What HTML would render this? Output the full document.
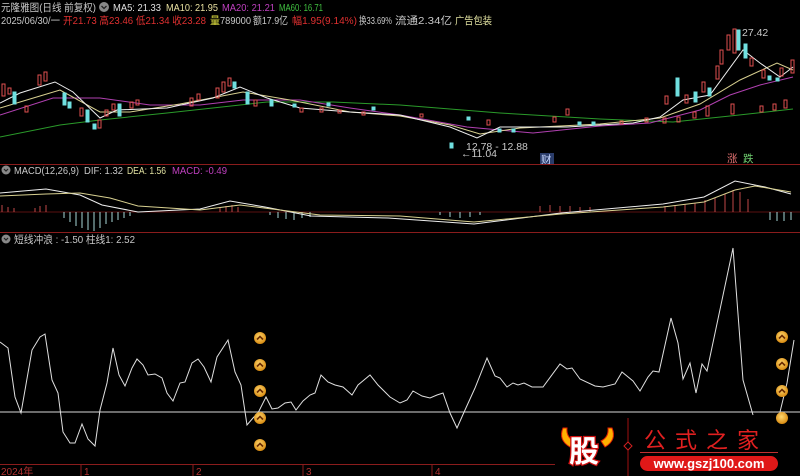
<!DOCTYPE html>
<html><head><meta charset="utf-8"><style>
html,body{margin:0;padding:0;background:#000;width:800px;height:476px;overflow:hidden}
svg{display:block}
text{font-family:"Liberation Sans","Noto Sans CJK SC",sans-serif;font-size:10.5px}
</style></head><body>
<svg width="800" height="476" viewBox="0 0 800 476" xmlns="http://www.w3.org/2000/svg">
<rect width="800" height="476" fill="#000"/>
<!-- header -->
<text x="1" y="11" fill="#c8c8c8" textLength="95" lengthAdjust="spacingAndGlyphs">元隆雅图(日线 前复权)</text>
<circle cx="104" cy="7" r="5" fill="#888"/><path d="M101.5 6 L104 8.5 L106.5 6" stroke="#222" stroke-width="1.3" fill="none"/>
<text x="113" y="11" fill="#e0e0e0" textLength="48" lengthAdjust="spacingAndGlyphs">MA5: 21.33</text>
<text x="166" y="11" fill="#e8e0a0" textLength="52" lengthAdjust="spacingAndGlyphs">MA10: 21.95</text>
<text x="222" y="11" fill="#c040c0" textLength="53" lengthAdjust="spacingAndGlyphs">MA20: 21.21</text>
<text x="279" y="11" fill="#40c040" textLength="44" lengthAdjust="spacingAndGlyphs">MA60: 16.71</text>
<text x="1" y="24" fill="#c8c8c8" textLength="59" lengthAdjust="spacingAndGlyphs">2025/06/30/一</text>
<text x="63" y="24" fill="#e03030" textLength="143" lengthAdjust="spacingAndGlyphs">开21.73 高23.46 低21.34 收23.28</text>
<text x="210" y="24" fill="#e0e040" textLength="10" lengthAdjust="spacingAndGlyphs">量</text>
<text x="220" y="24" fill="#c8c8c8" textLength="31" lengthAdjust="spacingAndGlyphs">789000</text>
<text x="253" y="24" fill="#c8c8c8" textLength="35" lengthAdjust="spacingAndGlyphs">额17.9亿</text>
<text x="292" y="24" fill="#e03030" textLength="65" lengthAdjust="spacingAndGlyphs">幅1.95(9.14%)</text>
<text x="359" y="24" fill="#c8c8c8" textLength="33" lengthAdjust="spacingAndGlyphs">换33.69%</text>
<text x="395" y="24" fill="#c8c8c8" textLength="57" lengthAdjust="spacingAndGlyphs">流通2.34亿</text>
<text x="455" y="24" fill="#e0e0a0" textLength="37" lengthAdjust="spacingAndGlyphs">广告包装</text>
<!-- price panel MA lines -->
<polyline fill="none" stroke="#2a9a2a" stroke-width="1" points="0,137 60,125 100,120 167,113 267,102 333,102 400,105 500,113 600,119 673,122 730,116 793,109"/>
<polyline fill="none" stroke="#b040b0" stroke-width="1" points="0,115 53,98 100,98 150,105 200,105 243,100 300,100 350,108 400,115 467,127 533,133 600,126 650,123 700,110 730,95 760,85 793,77"/>
<polyline fill="none" stroke="#d8d090" stroke-width="1" points="0,108 40,96 60,90 100,112 130,112 180,104 243,92 290,100 350,112 400,116 450,125 480,134 520,128 600,124 660,118 700,104 740,80 777,63 793,70"/>
<polyline fill="none" stroke="#eeeeee" stroke-width="1" points="0,103 20,93 55,82 73,92 100,118 117,110 167,108 213,98 240,87 267,98 300,108 350,112 400,115 450,127 477,138 500,127 567,127 633,123 660,117 683,100 710,95 743,50 760,63 780,77 793,67"/>
<!-- candles -->
<g stroke-width="1">
<g fill="none" stroke="#e05050">
<rect x="2" y="84" width="3" height="12"/><rect x="8" y="88" width="3" height="6"/><rect x="25" y="106" width="3" height="6"/><rect x="38" y="75" width="3" height="10"/><rect x="44" y="72" width="3" height="9"/><rect x="80" y="108" width="3" height="8"/><rect x="98" y="120" width="3" height="8"/><rect x="105" y="110" width="3" height="6"/><rect x="112" y="104" width="3" height="6"/><rect x="130" y="102" width="3" height="6"/><rect x="136" y="100" width="3" height="5"/><rect x="190" y="98" width="3" height="8"/><rect x="197" y="94" width="3" height="6"/><rect x="216" y="88" width="3" height="10"/><rect x="222" y="82" width="3" height="10"/><rect x="228" y="78" width="3" height="8"/><rect x="254" y="100" width="3" height="6"/><rect x="300" y="108" width="3" height="4"/><rect x="320" y="108" width="3" height="4"/><rect x="338" y="110" width="3" height="3"/><rect x="362" y="112" width="3" height="3"/><rect x="420" y="114" width="3" height="3"/><rect x="487" y="120" width="3" height="5"/><rect x="553" y="117" width="3" height="5"/><rect x="566" y="109" width="3" height="6"/><rect x="620" y="121" width="3" height="3"/><rect x="645" y="118" width="3" height="4"/><rect x="663" y="118" width="3" height="5"/><rect x="677" y="117" width="3" height="5"/><rect x="693" y="112" width="3" height="6"/><rect x="706" y="106" width="3" height="10"/><rect x="731" y="104" width="3" height="10"/><rect x="760" y="106" width="3" height="6"/><rect x="773" y="104" width="3" height="6"/><rect x="784" y="100" width="3" height="8"/>
<rect x="665" y="96" width="3" height="8"/><rect x="685" y="95" width="3" height="8"/><rect x="702" y="82" width="3" height="10"/><rect x="716" y="66" width="3" height="13"/><rect x="720" y="50" width="3" height="14"/><rect x="727" y="35" width="3" height="15"/><rect x="733" y="29" width="3" height="24"/><rect x="750" y="58" width="3" height="8"/><rect x="762" y="70" width="3" height="8"/><rect x="780" y="68" width="3" height="8"/><rect x="791" y="60" width="3" height="13"/>
</g>
<g fill="#70e0e0" stroke="#70e0e0">
<rect x="13" y="92" width="3" height="12"/><rect x="63" y="93" width="3" height="12"/><rect x="68" y="102" width="3" height="6"/><rect x="86" y="110" width="3" height="12"/><rect x="93" y="124" width="3" height="5"/><rect x="118" y="104" width="3" height="12"/><rect x="233" y="82" width="3" height="6"/><rect x="246" y="92" width="3" height="12"/><rect x="270" y="100" width="3" height="6"/><rect x="293" y="104" width="3" height="3"/><rect x="327" y="103" width="3" height="3"/><rect x="372" y="107" width="3" height="3"/><rect x="450" y="143" width="3" height="5"/><rect x="467" y="117" width="3" height="3"/><rect x="498" y="129" width="3" height="3"/><rect x="512" y="129" width="3" height="3"/><rect x="578" y="122" width="3" height="3"/><rect x="592" y="122" width="3" height="3"/>
<rect x="676" y="78" width="3" height="18"/><rect x="694" y="92" width="3" height="10"/><rect x="708" y="88" width="3" height="8"/><rect x="737" y="30" width="3" height="20"/><rect x="744" y="44" width="3" height="14"/><rect x="768" y="76" width="3" height="4"/><rect x="776" y="78" width="3" height="3"/>
</g>
</g>
<text x="742" y="36" fill="#c8c8c8">27.42</text>
<text x="466" y="150" fill="#c8c8c8">12.78 - 12.88</text>
<text x="461" y="157" fill="#c8c8c8">←11.04</text>
<rect x="540" y="153" width="14" height="11" fill="#2a3c6a"/><text x="541" y="163" fill="#c8d8ff">财</text>
<text x="727" y="162" fill="#e07070">涨</text><text x="743" y="162" fill="#70d070">跌</text>
<line x1="0" y1="164.5" x2="800" y2="164.5" stroke="#8a1c1c"/>
<!-- MACD -->
<circle cx="6" cy="170" r="4.5" fill="#888"/><path d="M4 169 L6 171 L8 169" stroke="#222" stroke-width="1.2" fill="none"/>
<text x="14" y="174" fill="#c8c8c8" textLength="65" lengthAdjust="spacingAndGlyphs">MACD(12,26,9)</text>
<text x="84" y="174" fill="#c8c8c8" textLength="39" lengthAdjust="spacingAndGlyphs">DIF: 1.32</text>
<text x="127" y="174" fill="#e0e0a0" textLength="39" lengthAdjust="spacingAndGlyphs">DEA: 1.56</text>
<text x="172" y="174" fill="#c040c0" textLength="55" lengthAdjust="spacingAndGlyphs">MACD: -0.49</text>
<line x1="0" y1="212" x2="800" y2="212" stroke="#5a1010"/>
<g stroke="#c04848">
<line x1="2" y1="205" x2="2" y2="212"/><line x1="8" y1="207" x2="8" y2="212"/><line x1="14" y1="208" x2="14" y2="212"/><line x1="35" y1="208" x2="35" y2="212"/><line x1="40" y1="206" x2="40" y2="212"/><line x1="46" y1="205" x2="46" y2="212"/>
<line x1="220" y1="208" x2="220" y2="212"/><line x1="226" y1="206" x2="226" y2="212"/><line x1="232" y1="205" x2="232" y2="212"/><line x1="238" y1="207" x2="238" y2="212"/>
<line x1="540" y1="206" x2="540" y2="212"/><line x1="550" y1="205" x2="550" y2="212"/><line x1="560" y1="206" x2="560" y2="212"/><line x1="570" y1="206" x2="570" y2="212"/><line x1="580" y1="207" x2="580" y2="212"/><line x1="590" y1="207" x2="590" y2="212"/>
<line x1="665" y1="206" x2="665" y2="212"/><line x1="675" y1="205" x2="675" y2="212"/><line x1="685" y1="204" x2="685" y2="212"/><line x1="695" y1="203" x2="695" y2="212"/><line x1="705" y1="200" x2="705" y2="212"/><line x1="715" y1="198" x2="715" y2="212"/><line x1="725" y1="194" x2="725" y2="212"/><line x1="733" y1="190" x2="733" y2="212"/><line x1="740" y1="192" x2="740" y2="212"/><line x1="748" y1="199" x2="748" y2="212"/>
</g>
<g stroke="#a8d8d8">
<line x1="64" y1="212" x2="64" y2="218"/><line x1="70" y1="212" x2="70" y2="222"/><line x1="76" y1="212" x2="76" y2="226"/><line x1="82" y1="212" x2="82" y2="228"/><line x1="88" y1="212" x2="88" y2="230"/><line x1="94" y1="212" x2="94" y2="231"/><line x1="100" y1="212" x2="100" y2="228"/><line x1="106" y1="212" x2="106" y2="224"/><line x1="112" y1="212" x2="112" y2="222"/><line x1="118" y1="212" x2="118" y2="220"/><line x1="124" y1="212" x2="124" y2="218"/><line x1="130" y1="212" x2="130" y2="216"/>
<line x1="270" y1="212" x2="270" y2="215"/><line x1="278" y1="212" x2="278" y2="218"/><line x1="286" y1="212" x2="286" y2="219"/><line x1="294" y1="212" x2="294" y2="220"/><line x1="302" y1="212" x2="302" y2="218"/><line x1="310" y1="212" x2="310" y2="217"/>
<line x1="440" y1="212" x2="440" y2="215"/><line x1="450" y1="212" x2="450" y2="217"/><line x1="460" y1="212" x2="460" y2="218"/><line x1="470" y1="212" x2="470" y2="217"/><line x1="480" y1="212" x2="480" y2="215"/>
<line x1="770" y1="212" x2="770" y2="220"/><line x1="777" y1="212" x2="777" y2="221"/><line x1="784" y1="212" x2="784" y2="221"/><line x1="791" y1="212" x2="791" y2="220"/>
</g>
<polyline fill="none" stroke="#eeeeee" points="0,193 46,189 80,195 102,205 138,212 200,209 230,201 265,207 311,216 388,218 474,224 561,213 663,204 704,197 735,181 765,187 791,194"/>
<polyline fill="none" stroke="#d8d090" points="0,196 46,194 80,193 110,198 138,206 200,210 240,205 280,210 320,215 400,216 474,222 561,214 663,207 704,202 735,190 755,186 791,192"/>
<line x1="0" y1="232.5" x2="800" y2="232.5" stroke="#8a1c1c"/>
<!-- bottom indicator -->
<circle cx="6" cy="239" r="4.5" fill="#888"/><path d="M4 238 L6 240 L8 238" stroke="#222" stroke-width="1.2" fill="none"/>
<text x="14" y="243" fill="#c8c8c8" textLength="121" lengthAdjust="spacingAndGlyphs">短线冲浪 : -1.50 柱线1: 2.52</text>
<line x1="0" y1="412" x2="800" y2="412" stroke="#d8d8d8"/>
<polyline fill="none" stroke="#e0e0e0" stroke-width="1" points="0,342 8,348 15,397 21,413 32,350 40,337 45,334 52,380 58,393 63,432 70,443 75,443 82,424 88,439 95,446 100,410 107,383 113,348 119,375 125,386 132,368 137,359 143,365 148,375 155,374 162,378 167,393 173,401 180,383 185,382 192,363 198,359 204,367 211,382 217,357 228,340 235,372 241,385 247,425 253,418 258,413 266,397 272,409 278,408 285,403 291,402 296,410 303,401 310,395 315,393 321,375 328,382 335,385 343,387 352,395 358,385 370,375 378,385 390,397 400,403 407,400 413,391 422,396 430,398 437,395 443,393 450,413 457,428 465,410 475,388 487,358 495,376 500,378 507,387 513,383 518,385 524,383 532,387 543,387 560,364 567,369 572,368 580,379 595,386 603,387 615,384 622,372 633,381 640,391 648,377 653,371 659,372 671,318 678,343 683,379 690,363 696,393 702,364 707,371 733,248 743,380 753,415"/>
<polyline fill="none" stroke="#e0e0e0" points="780,412 787,383 794,340"/>
<defs><radialGradient id="cg" cx="0.45" cy="0.4" r="0.6"><stop offset="0" stop-color="#ffd870"/><stop offset="1" stop-color="#d88a10"/></radialGradient></defs>
<g>
<g transform="translate(260,338)"><circle r="6" fill="url(#cg)"/><path d="M-3 1.5 L0 -1.5 L3 1.5" stroke="#6a2a00" stroke-width="1.6" fill="none"/></g>
<g transform="translate(260,365)"><circle r="6" fill="url(#cg)"/><path d="M-3 1.5 L0 -1.5 L3 1.5" stroke="#6a2a00" stroke-width="1.6" fill="none"/></g>
<g transform="translate(260,391)"><circle r="6" fill="url(#cg)"/><path d="M-3 1.5 L0 -1.5 L3 1.5" stroke="#6a2a00" stroke-width="1.6" fill="none"/></g>
<g transform="translate(260,418)"><circle r="6" fill="url(#cg)"/><path d="M-3 1.5 L0 -1.5 L3 1.5" stroke="#6a2a00" stroke-width="1.6" fill="none"/></g>
<g transform="translate(260,445)"><circle r="6" fill="url(#cg)"/><path d="M-3 1.5 L0 -1.5 L3 1.5" stroke="#6a2a00" stroke-width="1.6" fill="none"/></g>
<g transform="translate(782,337)"><circle r="6" fill="url(#cg)"/><path d="M-3 1.5 L0 -1.5 L3 1.5" stroke="#6a2a00" stroke-width="1.6" fill="none"/></g>
<g transform="translate(782,364)"><circle r="6" fill="url(#cg)"/><path d="M-3 1.5 L0 -1.5 L3 1.5" stroke="#6a2a00" stroke-width="1.6" fill="none"/></g>
<g transform="translate(782,391)"><circle r="6" fill="url(#cg)"/><path d="M-3 1.5 L0 -1.5 L3 1.5" stroke="#6a2a00" stroke-width="1.6" fill="none"/></g>
<g transform="translate(782,418)"><circle r="6" fill="url(#cg)"/></g>
</g>
<!-- axis -->
<line x1="0" y1="464.5" x2="555" y2="464.5" stroke="#8a1c1c"/>
<g stroke="#8a1c1c"><line x1="81" y1="464" x2="81" y2="476"/><line x1="193" y1="464" x2="193" y2="476"/><line x1="303" y1="464" x2="303" y2="476"/><line x1="432" y1="464" x2="432" y2="476"/></g>
<g fill="#b03030"><text x="1" y="475" style="font-size:10px">2024年</text><text x="84" y="475" style="font-size:10px">1</text><text x="196" y="475" style="font-size:10px">2</text><text x="306" y="475" style="font-size:10px">3</text><text x="435" y="475" style="font-size:10px">4</text></g>
<!-- logo -->
<path d="M563 428 Q558 440 570 447 L574 441 Q566 437 567 428 Z" fill="#ffb000" stroke="#e02000"/>
<path d="M612 428 Q617 440 605 447 L601 441 Q609 437 608 428 Z" fill="#ffb000" stroke="#e02000"/>
<text x="569" y="462" style="font-size:30px;font-weight:bold" fill="#fff" stroke="#d01010" stroke-width="2.5" paint-order="stroke" font-family="Noto Sans CJK SC">股</text>
<line x1="628" y1="418" x2="628" y2="476" stroke="#a01010"/>
<path d="M628 442 L632 446 L628 450 L624 446 Z" fill="#000" stroke="#d02020"/>
<text x="644" y="448" style="font-size:22px;letter-spacing:9px" fill="#e02020" font-family="Noto Serif CJK SC">公式之家</text>
<line x1="640" y1="452.5" x2="778" y2="452.5" stroke="#c03030"/>
<rect x="640" y="456" width="138" height="15" rx="7.5" fill="#e01818"/>
<text x="709" y="468" text-anchor="middle" style="font-size:13px;font-weight:bold" fill="#fff">www.gszj100.com</text>
</svg>
</body></html>
